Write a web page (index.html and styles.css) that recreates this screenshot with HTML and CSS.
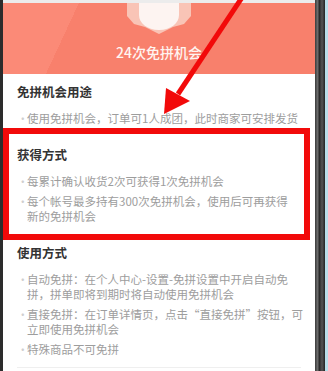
FILE: index.html
```html
<!DOCTYPE html>
<html lang="zh-CN">
<head>
    <meta charset="UTF-8">
    <meta name="viewport" content="width=device-width, initial-scale=1.0">
    <title>免拼机会</title>
    <link rel="stylesheet" href="styles.css">
</head>
<body>

    <div id="device">
        <div class="bezel-left"></div>

        <div class="screen">
            <div class="status"></div>

            <div class="banner">
                <svg class="badge" width="66" height="31" viewBox="0 0 66 31">
                    <polygon points="1,0 65,0 65,13 58,21 47,24 33,31 19,24 8,21 1,13" fill="#f9c4b6"/>
                    <path d="M13 0 H53 V12 C53 20 45 27 33 27 C21 27 13 20 13 12 Z" fill="#fdf4f1"/>
                </svg>
                <div class="banner-title">24次免拼机会</div>
            </div>

            <div class="content">
                <div class="section first">
                    <h2>免拼机会用途</h2>
                    <ul>
                        <li>使用免拼机会，订单可1人成团，此时商家可安排发货</li>
                    </ul>
                </div>

                <div class="section">
                    <h2>获得方式</h2>
                    <ul>
                        <li>每累计确认收货2次可获得1次免拼机会</li>
                        <li>每个帐号最多持有300次免拼机会，使用后可再获得<br>新的免拼机会</li>
                    </ul>
                </div>

                <div class="section">
                    <h2>使用方式</h2>
                    <ul>
                        <li>自动免拼：在个人中心-设置-免拼设置中开启自动免<br>拼，拼单即将到期时将自动使用免拼机会</li>
                        <li>直接免拼：在订单详情页，点击“直接免拼”按钮，可<br>立即使用免拼机会</li>
                        <li>特殊商品不可免拼</li>
                    </ul>
                </div>

                <div class="divider"></div>
            </div>
        </div>

        <div class="bezel-right"></div>
        <div class="edge"></div>

        <!-- annotation drawn over the screenshot -->
        <div class="mark-box"></div>
        <svg class="mark-arrow" width="328" height="371" viewBox="0 0 328 371">
            <line x1="243" y1="-4" x2="178" y2="94" stroke="#f20a0a" stroke-width="5"/>
            <polygon points="164,114 166,88 190,101" fill="#f20a0a"/>
        </svg>
    </div>

</body>
</html>
```

FILE: styles.css
```css
body {
    margin: 0;
    padding: 0;
    font-family: "Noto Sans CJK SC", "Noto Sans", sans-serif;
    background: #fff;
}

#device {
    position: relative;
    display: flex;
    width: 328px;
    height: 371px;
    overflow: hidden;
}

.bezel-left {
    width: 3px;
    background: #2c2c2c;
}

.screen {
    width: 312px;
    background: #fff;
}

.status {
    height: 3px;
    background: #ececec;
}

.banner {
    height: 71px;
    display: flex;
    flex-direction: column;
    align-items: center;
    background: linear-gradient(115deg, #fb8a77 0, #fb8a77 22%, #f8806c 22%, #f8806c 100%);
}

.badge {
    display: block;
}

.banner-title {
    margin-top: 9px;
    font-size: 14px;
    line-height: 18px;
    font-weight: 500;
    color: #fff4f0;
}

.content {
    padding: 0 14px;
}

.section {
    margin-top: 20px;
}

.section.first {
    margin-top: 9px;
}

h2 {
    margin: 0 0 10px;
    font-size: 12.5px;
    line-height: 18px;
    font-weight: 600;
    color: #333;
}

ul {
    margin: 0;
    padding: 0;
    list-style: none;
}

li {
    display: flex;
    margin-top: 5px;
    font-size: 11.5px;
    line-height: 15px;
    color: #9d9d9d;
    white-space: nowrap;
}

li:first-child {
    margin-top: 0;
}

li::before {
    content: "·";
    width: 10px;
    flex-shrink: 0;
    color: #cfcfcf;
}

.divider {
    margin-top: 10px;
    height: 1px;
    background: #efefef;
}

.bezel-right {
    width: 10px;
    background: linear-gradient(90deg, #3b3b3b 0, #6a6a6a 25%, #2a2a2a 45%, #555 70%, #222 100%);
}

.edge {
    width: 3px;
    background: #b9dde8;
}

.mark-box {
    position: absolute;
    left: 3px;
    top: 128px;
    width: 307px;
    height: 112px;
    border: 6px solid #f20a0a;
    box-sizing: border-box;
}

.mark-arrow {
    position: absolute;
    left: 0;
    top: 0;
    pointer-events: none;
}
```
